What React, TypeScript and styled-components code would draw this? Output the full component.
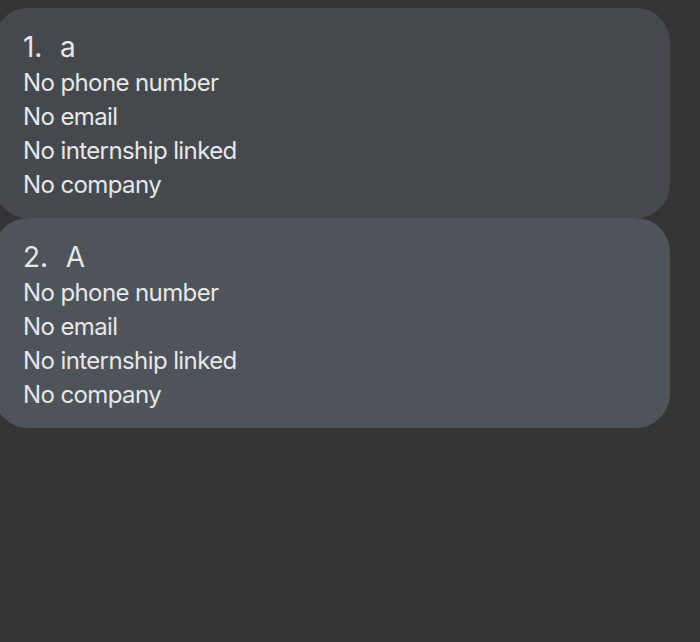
import React from "react";
import styled, { createGlobalStyle } from "styled-components";

const Global = createGlobalStyle`
  html, body { margin: 0; padding: 0; background: #353535; }
  body { font-family: Inter, "Noto Sans", sans-serif; overflow: hidden; }
`;

const Page = styled.div`
  width: 700px;
  height: 642px;
  background: #353535;
  padding-top: 8px;
  box-sizing: border-box;
`;

const List = styled.div`
  display: flex;
  flex-direction: column;
  width: 676px;
  margin-left: -6px;
`;

const Card = styled.div<{ $bg: string }>`
  background: ${(p) => p.$bg};
  border-radius: 34px;
  padding: 22px 0 16px 29px;
  display: flex;
  flex-direction: column;
  color: #e6e7e8;
`;

const Title = styled.div`
  display: flex;
  gap: 18px;
  font-size: 28px;
  line-height: 34px;
  height: 36px;
  letter-spacing: -0.2px;
`;

const Line = styled.div`
  font-size: 24px;
  line-height: 34px;
  letter-spacing: -0.6px;
`;

const people = [
  { name: "a", bg: "#45494d" },
  { name: "A", bg: "#4f535a" },
];

export default function App() {
  return (
    <Page>
      <Global />
      <List>
        {people.map((p, i) => (
          <Card key={i} $bg={p.bg}>
            <Title>
              <span>{`${i + 1}.`}</span>
              <span>{p.name}</span>
            </Title>
            <Line>No phone number</Line>
            <Line>No email</Line>
            <Line>No internship linked</Line>
            <Line>No company</Line>
          </Card>
        ))}
      </List>
    </Page>
  );
}
